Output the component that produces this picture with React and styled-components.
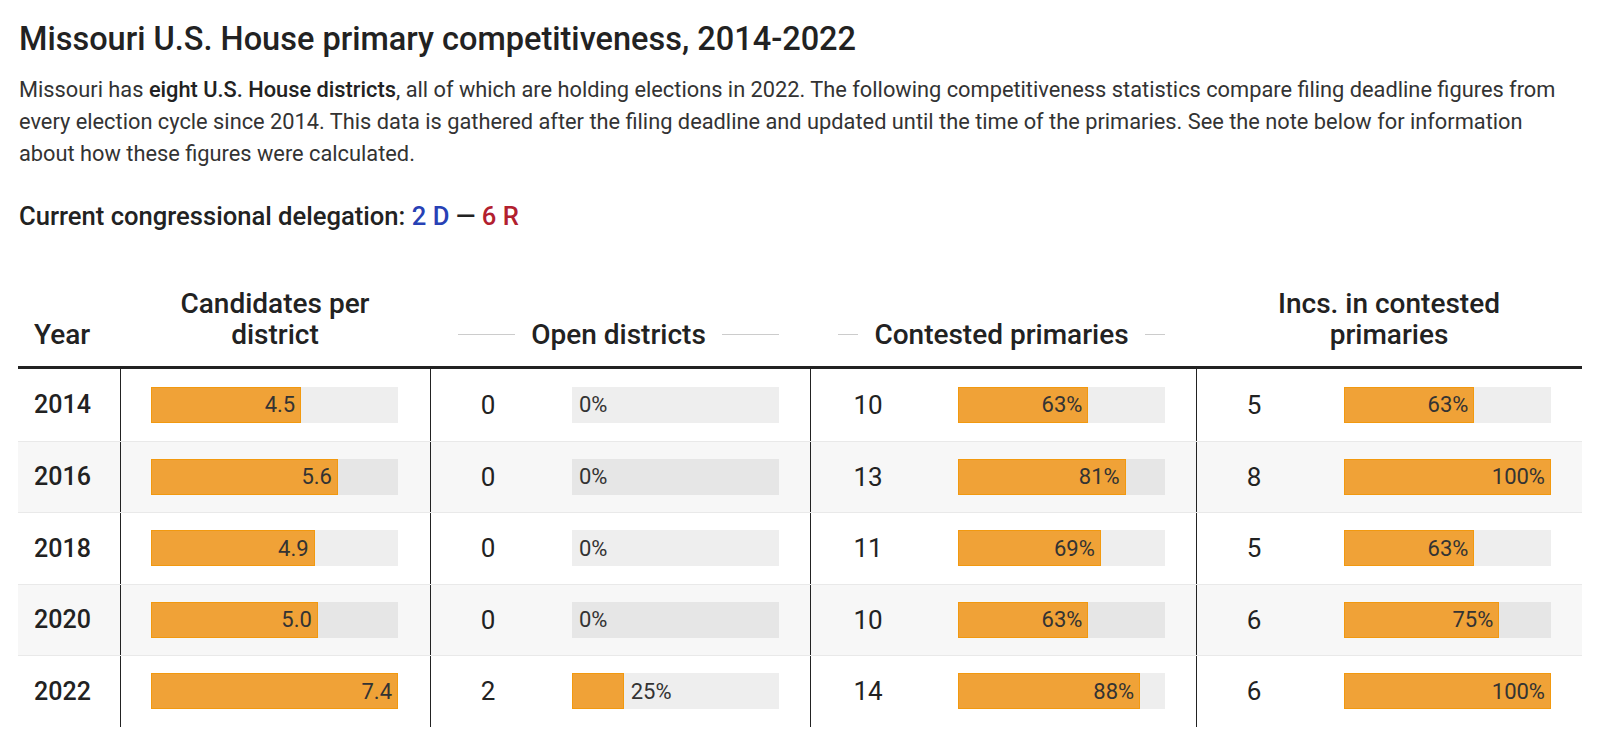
import styled, { createGlobalStyle } from "styled-components";

const GlobalStyle = createGlobalStyle`
  body {
    margin: 0;
    background: #ffffff;
    font-family: Roboto, "Liberation Sans", sans-serif;
    color: #333333;
  }
`;

const Page = styled.div`
  padding: 20px 18px 0 18px;
  width: 1564px;
`;

const Title = styled.h1`
  margin: 0 0 0 1px;
  font-size: 32.5px;
  line-height: 38px;
  font-weight: 500;
  color: #222222;
`;

const Intro = styled.p`
  margin: 16px 0 0 1px;
  font-size: 21.8px;
  line-height: 32px;
  font-weight: 400;
  color: #333333;

  b {
    font-weight: 500;
    color: #222222;
  }
`;

const Delegation = styled.div`
  margin: 31px 0 0 1px;
  font-size: 25.6px;
  line-height: 30px;
  font-weight: 500;
  color: #222222;
`;

const Party = styled.span`
  color: ${(p) => (p.$side === "D" ? "#2741b5" : "#b2202f")};
`;

const Table = styled.div`
  margin-top: 57px;
`;

const cols = "102px 310px 380px 386px 386px";

const HeadRow = styled.div`
  display: grid;
  grid-template-columns: ${cols};
  align-items: end;
  padding-bottom: 16px;
  border-bottom: 3px solid #222222;
`;

const HeadText = styled.div`
  font-size: 28px;
  line-height: 31px;
  font-weight: 500;
  color: #222222;
  text-align: ${(p) => p.$align || "center"};
  padding-left: ${(p) => (p.$align === "left" ? "16px" : "0")};
`;

const RuledHead = styled.div`
  display: flex;
  align-items: center;
  gap: 16px;
  margin: 0 31px 0 28px;
  font-size: 28px;
  line-height: 31px;
  font-weight: 500;
  color: #222222;
  white-space: nowrap;

  &::before,
  &::after {
    content: "";
    flex: 1;
    height: 1.5px;
    background: #cccccc;
  }
`;

const Row = styled.div`
  display: grid;
  grid-template-columns: ${cols};
  height: 71.5px;
  box-sizing: border-box;
  background: ${(p) => (p.$alt ? "#f7f7f7" : "#ffffff")};
  border-top: ${(p) => (p.$first ? "none" : "1.5px solid #e9e9e9")};
`;

const YearCell = styled.div`
  display: flex;
  align-items: center;
  padding-left: 16px;
  font-size: 25px;
  font-weight: 500;
  color: #222222;
`;

const BarCell = styled.div`
  display: flex;
  align-items: center;
  border-left: 1.5px solid #222222;
  padding: 0 32px 0 30px;
`;

const StatCell = styled.div`
  display: grid;
  grid-template-columns: 1fr 207px;
  align-items: center;
  border-left: 1.5px solid #222222;
  padding-right: 31px;
`;

const Count = styled.div`
  width: 114px;
  text-align: center;
  font-size: 26px;
  color: #222222;
`;

const Track = styled.div`
  display: flex;
  align-items: center;
  width: 100%;
  height: 36px;
  background: ${(p) => (p.$alt ? "#e6e6e6" : "#eeeeee")};
`;

const Fill = styled.div`
  display: flex;
  align-items: center;
  justify-content: flex-end;
  box-sizing: border-box;
  height: 100%;
  background: #f0a237;
  border: ${(p) => (p.$empty ? "none" : "1px solid #f2990f")};
  flex-shrink: 0;
`;

const BarLabel = styled.span`
  font-size: 22px;
  color: #333333;
  padding: ${(p) => (p.$outside ? "0 0 0 7px" : "0 5px 0 0")};
  white-space: nowrap;
`;

const Bar = ({ pct, label, alt }) => {
  const outside = pct < 30;
  return (
    <Track $alt={alt}>
      <Fill $empty={pct === 0} style={{ width: `${pct}%` }}>
        {!outside && <BarLabel>{label}</BarLabel>}
      </Fill>
      {outside && <BarLabel $outside>{label}</BarLabel>}
    </Track>
  );
};

const data = [
  { year: 2014, cand: 4.5, open: 0, openPct: 0, cont: 10, contPct: 63, inc: 5, incPct: 63 },
  { year: 2016, cand: 5.6, open: 0, openPct: 0, cont: 13, contPct: 81, inc: 8, incPct: 100 },
  { year: 2018, cand: 4.9, open: 0, openPct: 0, cont: 11, contPct: 69, inc: 5, incPct: 63 },
  { year: 2020, cand: 5.0, open: 0, openPct: 0, cont: 10, contPct: 63, inc: 6, incPct: 75 },
  { year: 2022, cand: 7.4, open: 2, openPct: 25, cont: 14, contPct: 88, inc: 6, incPct: 100 },
];

const maxCand = 7.4;

const App = () => {
  return (
    <>
      <GlobalStyle />
      <Page>
        <Title>Missouri U.S. House primary competitiveness, 2014-2022</Title>
        <Intro>
          Missouri has <b>eight U.S. House districts</b>, all of which are holding elections in
          2022. The following competitiveness statistics compare filing deadline figures from
          every election cycle since 2014. This data is gathered after the filing deadline and
          updated until the time of the primaries. See the note below for information about how
          these figures were calculated.
        </Intro>
        <Delegation>
          Current congressional delegation: <Party $side="D">2 D</Party> —{" "}
          <Party $side="R">6 R</Party>
        </Delegation>

        <Table>
          <HeadRow>
            <HeadText $align="left">Year</HeadText>
            <HeadText>
              Candidates per
              <br />
              district
            </HeadText>
            <RuledHead>Open districts</RuledHead>
            <RuledHead>Contested primaries</RuledHead>
            <HeadText>
              Incs. in contested
              <br />
              primaries
            </HeadText>
          </HeadRow>

          {data.map((d, i) => {
            const alt = i % 2 === 1;
            return (
              <Row key={d.year} $alt={alt} $first={i === 0}>
                <YearCell>{d.year}</YearCell>
                <BarCell>
                  <Bar pct={(d.cand / maxCand) * 100} label={d.cand.toFixed(1)} alt={alt} />
                </BarCell>
                <StatCell>
                  <Count>{d.open}</Count>
                  <Bar pct={d.openPct} label={`${d.openPct}%`} alt={alt} />
                </StatCell>
                <StatCell>
                  <Count>{d.cont}</Count>
                  <Bar pct={d.contPct} label={`${d.contPct}%`} alt={alt} />
                </StatCell>
                <StatCell>
                  <Count>{d.inc}</Count>
                  <Bar pct={d.incPct} label={`${d.incPct}%`} alt={alt} />
                </StatCell>
              </Row>
            );
          })}
        </Table>
      </Page>
    </>
  );
};

export default App;
